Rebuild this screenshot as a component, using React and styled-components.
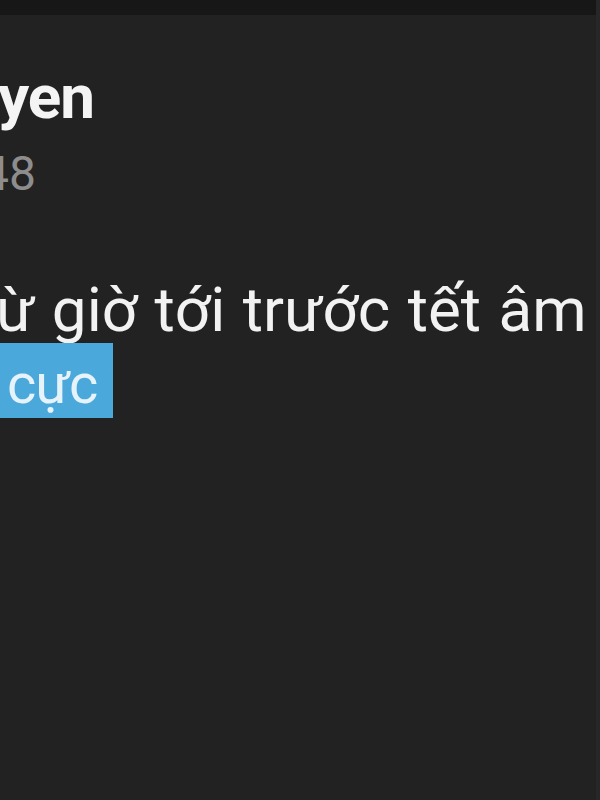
import React from 'react';
import styled, { createGlobalStyle } from 'styled-components';

const GlobalStyle = createGlobalStyle`
  html, body {
    margin: 0;
    padding: 0;
    background: #222222;
  }
  body {
    font-family: Roboto, Inter, "Liberation Sans", sans-serif;
    -webkit-font-smoothing: antialiased;
  }
`;

const Screen = styled.div`
  width: 600px;
  height: 800px;
  background: #222222;
  overflow: hidden;
  display: flex;
  flex-direction: column;
  border-right: 4px solid #272727;
  box-sizing: border-box;
`;

const TopBar = styled.div`
  height: 15px;
  flex-shrink: 0;
  background: #171717;
`;

const Post = styled.div`
  display: flex;
  flex-direction: column;
  white-space: nowrap;
`;

const Name = styled.div`
  margin-left: ${p => -p.shift}px;
  margin-top: 51px;
  font-size: 62px;
  line-height: 62px;
  font-weight: 700;
  color: #f4f4f4;
  letter-spacing: -1px;
`;

const Meta = styled.div`
  margin-left: ${p => -p.shift}px;
  margin-top: 22px;
  font-size: 48px;
  line-height: 48px;
  color: #8d8d8d;
`;

const Body = styled.div`
  margin-top: 76px;
  font-size: 62px;
  line-height: 72px;
  color: #f2f2f2;
  word-spacing: 2px;
`;

const Line = styled.div`
  margin-left: ${p => -p.shift}px;
`;

const Mark = styled.span`
  background: #4aa8da;
  color: #e6f3fb;
  font-size: 56px;
  letter-spacing: -1px;
  padding: 8px 16px 1px 7px;
`;

export default function App() {
  return (
    <>
      <GlobalStyle />
      <Screen>
        <TopBar />
        <Post>
          <Name shift={113}>Nguyen</Name>
          <Meta shift={18}>48</Meta>
          <Body>
            <Line shift={38}>Từ giờ tới trước tết âm</Line>
            <Line shift={0}>
              <Mark>cực</Mark>
            </Line>
          </Body>
        </Post>
      </Screen>
    </>
  );
}
